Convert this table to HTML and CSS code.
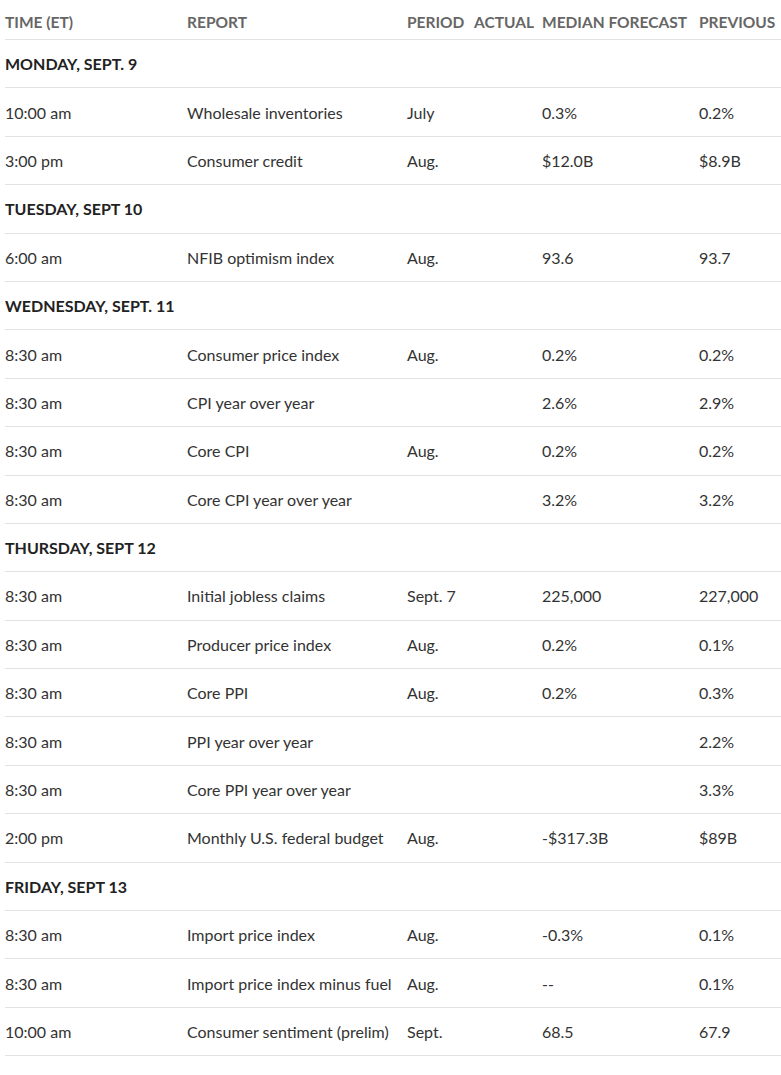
FILE: index.html
```html
<!DOCTYPE html>
<html lang="en">
<head>
<meta charset="utf-8">
<title>Economic calendar</title>
<link rel="stylesheet" href="styles.css">
</head>
<body>
<div class="wrap">
<table class="cal">
<colgroup>
<col class="c-time"><col class="c-report"><col class="c-period"><col class="c-actual"><col class="c-median"><col class="c-prev">
</colgroup>
<thead>
<tr><th>TIME (ET)</th><th>REPORT</th><th>PERIOD</th><th>ACTUAL</th><th>MEDIAN FORECAST</th><th>PREVIOUS</th></tr>
</thead>
<tbody>
<tr class="day"><td colspan="6">MONDAY, SEPT. 9</td></tr>
<tr><td>10:00 am</td><td>Wholesale inventories</td><td>July</td><td></td><td>0.3%</td><td>0.2%</td></tr>
<tr><td>3:00 pm</td><td>Consumer credit</td><td>Aug.</td><td></td><td>$12.0B</td><td>$8.9B</td></tr>
<tr class="day"><td colspan="6">TUESDAY, SEPT 10</td></tr>
<tr><td>6:00 am</td><td>NFIB optimism index</td><td>Aug.</td><td></td><td>93.6</td><td>93.7</td></tr>
<tr class="day"><td colspan="6">WEDNESDAY, SEPT. 11</td></tr>
<tr><td>8:30 am</td><td>Consumer price index</td><td>Aug.</td><td></td><td>0.2%</td><td>0.2%</td></tr>
<tr><td>8:30 am</td><td>CPI year over year</td><td></td><td></td><td>2.6%</td><td>2.9%</td></tr>
<tr><td>8:30 am</td><td>Core CPI</td><td>Aug.</td><td></td><td>0.2%</td><td>0.2%</td></tr>
<tr><td>8:30 am</td><td>Core CPI year over year</td><td></td><td></td><td>3.2%</td><td>3.2%</td></tr>
<tr class="day"><td colspan="6">THURSDAY, SEPT 12</td></tr>
<tr><td>8:30 am</td><td>Initial jobless claims</td><td>Sept. 7</td><td></td><td>225,000</td><td>227,000</td></tr>
<tr><td>8:30 am</td><td>Producer price index</td><td>Aug.</td><td></td><td>0.2%</td><td>0.1%</td></tr>
<tr><td>8:30 am</td><td>Core PPI</td><td>Aug.</td><td></td><td>0.2%</td><td>0.3%</td></tr>
<tr><td>8:30 am</td><td>PPI year over year</td><td></td><td></td><td></td><td>2.2%</td></tr>
<tr><td>8:30 am</td><td>Core PPI year over year</td><td></td><td></td><td></td><td>3.3%</td></tr>
<tr><td>2:00 pm</td><td>Monthly U.S. federal budget</td><td>Aug.</td><td></td><td>-$317.3B</td><td>$89B</td></tr>
<tr class="day"><td colspan="6">FRIDAY, SEPT 13</td></tr>
<tr><td>8:30 am</td><td>Import price index</td><td>Aug.</td><td></td><td>-0.3%</td><td>0.1%</td></tr>
<tr><td>8:30 am</td><td>Import price index minus fuel</td><td>Aug.</td><td></td><td>--</td><td>0.1%</td></tr>
<tr><td>10:00 am</td><td>Consumer sentiment (prelim)</td><td>Sept.</td><td></td><td>68.5</td><td>67.9</td></tr>
</tbody>
</table>
</div>
</body>
</html>
```

FILE: styles.css
```css
html, body {
  margin: 0;
  padding: 0;
  background: #fff;
  overflow: hidden;
}
.wrap {
  padding-left: 5px;
}
.cal {
  width: 800px;
  border-collapse: collapse;
  table-layout: fixed;
  font-family: Lato, "Open Sans", sans-serif;
  color: #333;
}
.c-time { width: 182px; }
.c-report { width: 220px; }
.c-period { width: 67px; }
.c-actual { width: 68px; }
.c-median { width: 157px; }
.c-prev { width: 106px; }
.cal th {
  text-align: left;
  font-size: 15.5px;
  font-weight: 700;
  color: #666;
  height: 35px;
  padding: 4px 0 0 0;
  white-space: nowrap;
  vertical-align: middle;
  border-bottom: 1px solid #e2e2e2;
}
.cal td {
  font-size: 16px;
  height: 47.4px;
  padding: 0;
  white-space: nowrap;
  vertical-align: middle;
  border-bottom: 1px solid #e2e2e2;
}
.cal tr.day td {
  font-weight: 700;
  color: #222;
}
```
